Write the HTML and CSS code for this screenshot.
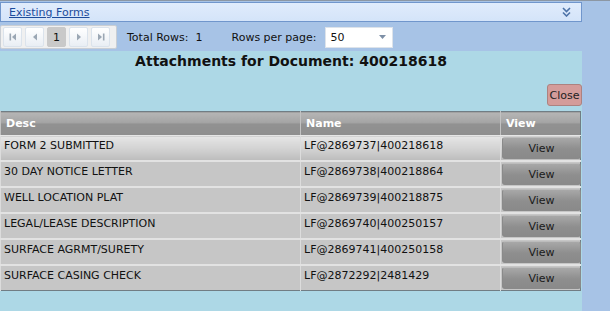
FILE: index.html
```html
<!DOCTYPE html>
<html lang="en">
<head>
    <meta charset="UTF-8">
    <title>Existing Forms</title>
    <link rel="stylesheet" href="styles.css">
</head>
<body>
    <div class="page">
        <div class="forms-bar">
            <a href="#" class="forms-link">Existing Forms</a>
            <svg class="chevron" width="9" height="10" viewBox="0 0 9 10">
                <path d="M1 1l3.5 3.5L8 1M1 5.5l3.5 3.5L8 5.5" fill="none" stroke="#4d73a8" stroke-width="1.6"/>
            </svg>
        </div>

        <div class="toolbar">
            <div class="pager">
                <span class="pg-btn"><svg width="8" height="8" viewBox="0 0 8 8"><rect x="0.5" y="0.5" width="1.6" height="7" fill="#9ba7b4"/><path d="M7 0.5v7L3 4z" fill="#9ba7b4"/></svg></span>
                <span class="pg-btn"><svg width="8" height="8" viewBox="0 0 8 8"><path d="M6 0.5v7L2 4z" fill="#9ba7b4"/></svg></span>
                <span class="pg-btn current">1</span>
                <span class="pg-btn"><svg width="8" height="8" viewBox="0 0 8 8"><path d="M2 0.5v7L6 4z" fill="#9ba7b4"/></svg></span>
                <span class="pg-btn"><svg width="8" height="8" viewBox="0 0 8 8"><path d="M1 0.5v7L5 4z" fill="#9ba7b4"/><rect x="5.9" y="0.5" width="1.6" height="7" fill="#9ba7b4"/></svg></span>
            </div>
            <span class="total">Total Rows:&nbsp; 1</span>
            <span class="per-page">Rows per page:</span>
            <div class="select">
                <span>50</span>
                <svg width="7" height="4" viewBox="0 0 7 4"><path d="M0 0h7L3.5 4z" fill="#7d8fa6"/></svg>
            </div>
        </div>

        <div class="panel">
            <h1>Attachments for Document: 400218618</h1>
            <div class="actions">
                <button class="close-btn">Close</button>
            </div>
            <table class="grid">
                <colgroup>
                    <col class="col-desc">
                    <col class="col-name">
                    <col class="col-view">
                </colgroup>
                <thead>
                    <tr>
                        <th>Desc</th>
                        <th>Name</th>
                        <th>View</th>
                    </tr>
                </thead>
                <tbody>
                    <tr class="hot">
                        <td>FORM 2 SUBMITTED</td>
                        <td>LF@2869737|400218618</td>
                        <td class="btn-cell"><button class="view-btn">View</button></td>
                    </tr>
                    <tr>
                        <td>30 DAY NOTICE LETTER</td>
                        <td>LF@2869738|400218864</td>
                        <td class="btn-cell"><button class="view-btn">View</button></td>
                    </tr>
                    <tr>
                        <td>WELL LOCATION PLAT</td>
                        <td>LF@2869739|400218875</td>
                        <td class="btn-cell"><button class="view-btn">View</button></td>
                    </tr>
                    <tr>
                        <td>LEGAL/LEASE DESCRIPTION</td>
                        <td>LF@2869740|400250157</td>
                        <td class="btn-cell"><button class="view-btn">View</button></td>
                    </tr>
                    <tr>
                        <td>SURFACE AGRMT/SURETY</td>
                        <td>LF@2869741|400250158</td>
                        <td class="btn-cell"><button class="view-btn">View</button></td>
                    </tr>
                    <tr>
                        <td>SURFACE CASING CHECK</td>
                        <td>LF@2872292|2481429</td>
                        <td class="btn-cell"><button class="view-btn">View</button></td>
                    </tr>
                </tbody>
            </table>
        </div>
    </div>
</body>
</html>
```

FILE: styles.css
```css
:root {
    --font-ui: 'DejaVu Sans', Verdana, sans-serif;
    --page-blue: #a7c3e6;
    --panel-blue: #add8e6;
    --row-gray: #c6c6c6;
}

html, body {
    margin: 0;
    height: 100%;
}

body {
    background: var(--page-blue);
    font-family: var(--font-ui);
    font-size: 11px;
    color: #111;
    border-top: 1px solid #8c97a3;
    overflow: hidden;
}

.page {
    width: 582px;
    height: 100%;
    display: flex;
    flex-direction: column;
}
.page > * { flex-shrink: 0; }

/* --- forms bar --- */
.forms-bar {
    margin-top: 1px;
    height: 18px;
    border: 1px solid #7096cc;
    background: linear-gradient(#e0ecfc, #d4e4f9);
    display: flex;
    align-items: center;
    justify-content: space-between;
    padding: 0 8px;
}
.forms-link {
    color: #1d4c9c;
    font-size: 11px;
    text-decoration: underline;
}
.chevron { margin-right: 2px; }

/* --- toolbar --- */
.toolbar {
    height: 28px;
    display: flex;
    align-items: center;
    padding-top: 1px;
}
.pager {
    width: 113px;
    height: 22px;
    background: #f0f0f0;
    border: 1px solid #c9ced4;
    border-radius: 2px;
    display: flex;
    align-items: center;
    gap: 3px;
    padding-left: 2px;
}
.pg-btn {
    width: 17px;
    height: 18px;
    border: 1px solid #dbe3ec;
    background: linear-gradient(#ffffff, #e9eef4);
    border-radius: 2px;
    display: flex;
    align-items: center;
    justify-content: center;
}
.pg-btn.current {
    background: #c9c9c9;
    border-color: #c9c9c9;
    font-size: 11px;
    color: #111;
}
.total { margin-left: 10px; }
.per-page { margin-left: 29px; }
.select {
    margin-left: 8px;
    width: 55px;
    height: 19px;
    background: #fff;
    border: 1px solid #dde3ea;
    padding: 0 6px 0 5px;
    display: flex;
    align-items: center;
    justify-content: space-between;
}

/* --- attachments panel --- */
.panel {
    flex: 1 0 auto;
    background: var(--panel-blue);
    display: flex;
    flex-direction: column;
}
h1 {
    margin: 2px 0 0;
    font-size: 14px;
    font-weight: bold;
    text-align: center;
    line-height: 16px;
}
.actions {
    display: flex;
    justify-content: flex-end;
    margin-top: 15px;
    height: 27px;
}
.close-btn {
    width: 35px;
    height: 22px;
    padding: 0;
    background: #d49c9a;
    border: 1px solid #ad8280;
    border-radius: 3px;
    font-family: var(--font-ui);
    font-size: 11px;
    color: #222;
}

.grid {
    width: 581px;
    border-collapse: collapse;
    border: 1px solid #717d84;
    table-layout: fixed;
}
.col-desc { width: 300px; }
.col-name { width: 200px; }
.grid th {
    height: 23px;
    padding: 0 0 0 5px;
    text-align: left;
    color: #fff;
    font-size: 11px;
    background: linear-gradient(#b6b6b6, #a4a4a4 45%, #919191 50%, #8f8f8f);
    border-left: 1px solid #c2c2c2;
    border-bottom: 1px solid #e6e6e6;
}
.grid td {
    height: 21px;
    padding: 3px 3px 0;
    vertical-align: top;
    background: var(--row-gray);
    border-left: 1px solid #dcdcdc;
    border-top: 2px solid #e2e2e2;
}
.grid tbody tr:first-child td { border-top: 1px solid #e6e6e6; }
.grid tr.hot td { background: linear-gradient(#e6e6e6, #cfcfcf 60%, #bcbcbc); }
.grid td.btn-cell {
    padding: 1px 0 0 1px;
}
.view-btn {
    width: 79px;
    height: 22px;
    padding: 0;
    background: linear-gradient(#a8a8a8, #8e8e8e 55%, #8a8a8a);
    border: 1px solid #8a8a8a;
    border-top-color: #bcbcbc;
    border-radius: 3px;
    font-family: var(--font-ui);
    font-size: 11px;
    color: #1a1a1a;
}
```
